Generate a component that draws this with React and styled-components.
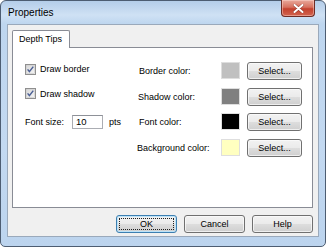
import React from 'react';
import styled, { createGlobalStyle } from 'styled-components';

const GlobalStyle = createGlobalStyle`
    body {
        margin: 0;
        background: #ffffff;
        font-family: "Liberation Sans", Arial, sans-serif;
    }
`;

const Window = styled.div`
    width: 326px;
    height: 247px;
    box-sizing: border-box;
    display: flex;
    flex-direction: column;
    padding: 0 6px 9px 6px;
    border: 1px solid #4d5d72;
    border-radius: 6px 6px 5px 5px;
    background: linear-gradient(180deg, #b4cde9 0px, #cfe1f4 14px, #bed6ef 23px, #c3d9f1 60%, #bcd4ee 100%);
`;

const TitleBar = styled.div`
    height: 23px;
    flex: none;
    display: flex;
    align-items: flex-start;
`;

const Title = styled.span`
    font-size: 10px;
    line-height: 12px;
    padding: 6px 0 0 1px;
    color: #000;
`;

const CloseButton = styled.div`
    margin-left: auto;
    margin-right: 4px;
    margin-top: -1px;
    width: 34px;
    height: 17px;
    box-sizing: border-box;
    border: 1px solid #6e2c25;
    border-top: none;
    border-radius: 0 0 4px 4px;
    background: linear-gradient(180deg, #e9a99c 0%, #d7715f 45%, #c4412e 55%, #d2644f 100%);
    box-shadow: inset 0 0 0 1px rgba(255, 220, 210, 0.45);
    display: flex;
    align-items: center;
    justify-content: center;
`;

const Client = styled.div`
    flex: 1;
    display: flex;
    flex-direction: column;
    padding: 5px 5px 3px 4px;
    border: 1px solid #9aa9bb;
    background: #f0f0f0;
`;

const TabStrip = styled.div`
    height: 17px;
    display: flex;
    align-items: flex-end;
`;

const Tab = styled.div`
    position: relative;
    z-index: 1;
    height: 18px;
    margin-bottom: -1px;
    box-sizing: border-box;
    padding: 0 7px 0 6px;
    border: 1px solid #898c95;
    border-bottom: none;
    border-radius: 2px 2px 0 0;
    background: #ffffff;
    font-size: 9px;
    line-height: 16px;
    color: #000;
`;

const Panel = styled.div`
    height: 161px;
    box-sizing: border-box;
    border: 1px solid #898c95;
    background: #ffffff;
    padding: 14px 0 0 12px;
`;

const Grid = styled.div`
    display: grid;
    grid-template-columns: 113px 83px 26px 55px;
    grid-template-rows: repeat(4, 18px);
    row-gap: 7.5px;
    font-size: 9px;
    color: #000;
`;

const CheckRow = styled.label`
    display: flex;
    align-items: center;
    gap: 4px;
    height: 12px;
    margin-top: ${p => p.offset}px;
`;

const Label = styled.span`
    display: flex;
    align-items: center;
    white-space: nowrap;
    margin-left: ${p => p.shift || 0}px;
`;

const FontRow = styled.div`
    display: flex;
    align-items: center;
`;

const SizeInput = styled.div`
    width: 31px;
    height: 14px;
    box-sizing: border-box;
    margin-left: 8px;
    border: 1px solid #abadb3;
    border-top-color: #8e9198;
    background: #fff;
    padding-left: 3px;
    line-height: 12px;
    font-size: 9.5px;
`;

const Unit = styled.span`
    margin-left: 6px;
`;

const Swatch = styled.div`
    width: 19px;
    height: 17px;
    box-sizing: border-box;
    border: 1px solid #dedede;
    background: ${p => p.color};
`;

const Button = styled.div`
    width: ${p => p.w || 55}px;
    height: 18px;
    box-sizing: border-box;
    position: relative;
    display: flex;
    align-items: center;
    justify-content: center;
    border: 1px solid ${p => (p.focused ? '#3c7fb1' : '#707070')};
    border-radius: 3px;
    background: linear-gradient(180deg, #f2f2f2 0%, #ebebeb 48%, #dddddd 52%, #cfcfcf 100%);
    box-shadow: inset 0 0 0 1px ${p => (p.focused ? '#bde3f8' : 'rgba(252, 252, 252, 0.7)')};
    font-size: 9px;
    color: #000;

    &::after {
        content: '';
        display: ${p => (p.focused ? 'block' : 'none')};
        position: absolute;
        inset: 2px;
        border: 1px dotted #202020;
    }
`;

const Footer = styled.div`
    display: flex;
    justify-content: flex-end;
    gap: 7px;
    margin-top: 7px;
`;

const CheckBox = () => (
    <svg width="11" height="11" viewBox="0 0 11 11">
        <defs>
            <linearGradient id="cbg" x1="0" y1="0" x2="1" y2="1">
                <stop offset="0" stopColor="#d8d8d8" />
                <stop offset="1" stopColor="#f4f4f4" />
            </linearGradient>
        </defs>
        <rect x="0.5" y="0.5" width="10" height="10" fill="#f4f4f4" stroke="#8f8f8f" />
        <rect x="1.5" y="1.5" width="8" height="8" fill="url(#cbg)" stroke="#c8c8c8" strokeWidth="0.6" />
        <path d="M2.6 5.4 L4.4 7.6 L8.3 2.6" fill="none" stroke="#4b5f94" strokeWidth="1.5" />
    </svg>
);

const CloseGlyph = () => (
    <svg width="11" height="9" viewBox="0 0 11 9">
        <path d="M1.5 1 L9.5 8 M9.5 1 L1.5 8" stroke="#5c1e17" strokeWidth="3" strokeLinecap="round" opacity="0.5" />
        <path d="M1.5 1 L9.5 8 M9.5 1 L1.5 8" stroke="#ffffff" strokeWidth="2" strokeLinecap="round" />
    </svg>
);

const colors = [
    { label: 'Border color:', color: '#c0c0c0', shift: 1 },
    { label: 'Shadow color:', color: '#808080', shift: 0 },
    { label: 'Font color:', color: '#000000', shift: 1 },
    { label: 'Background color:', color: '#ffffc0', shift: -1 },
];

const App = () => {
    const left = [
        <CheckRow key="b" offset={1}><CheckBox /><span>Draw border</span></CheckRow>,
        <CheckRow key="s" offset={0}><CheckBox /><span>Draw shadow</span></CheckRow>,
        <FontRow key="f"><span>Font size:</span><SizeInput>10</SizeInput><Unit>pts</Unit></FontRow>,
        <span key="e" />,
    ];

    return (
        <>
            <GlobalStyle />
            <Window>
                <TitleBar>
                    <Title>Properties</Title>
                    <CloseButton><CloseGlyph /></CloseButton>
                </TitleBar>
                <Client>
                    <TabStrip>
                        <Tab>Depth Tips</Tab>
                    </TabStrip>
                    <Panel>
                        <Grid>
                            {colors.map((c, i) => (
                                <React.Fragment key={c.label}>
                                    {left[i]}
                                    <Label shift={c.shift}>{c.label}</Label>
                                    <Swatch color={c.color} />
                                    <Button>Select...</Button>
                                </React.Fragment>
                            ))}
                        </Grid>
                    </Panel>
                    <Footer>
                        <Button w={61} focused>OK</Button>
                        <Button w={61}>Cancel</Button>
                        <Button w={61}>Help</Button>
                    </Footer>
                </Client>
            </Window>
        </>
    );
};

export default App;
